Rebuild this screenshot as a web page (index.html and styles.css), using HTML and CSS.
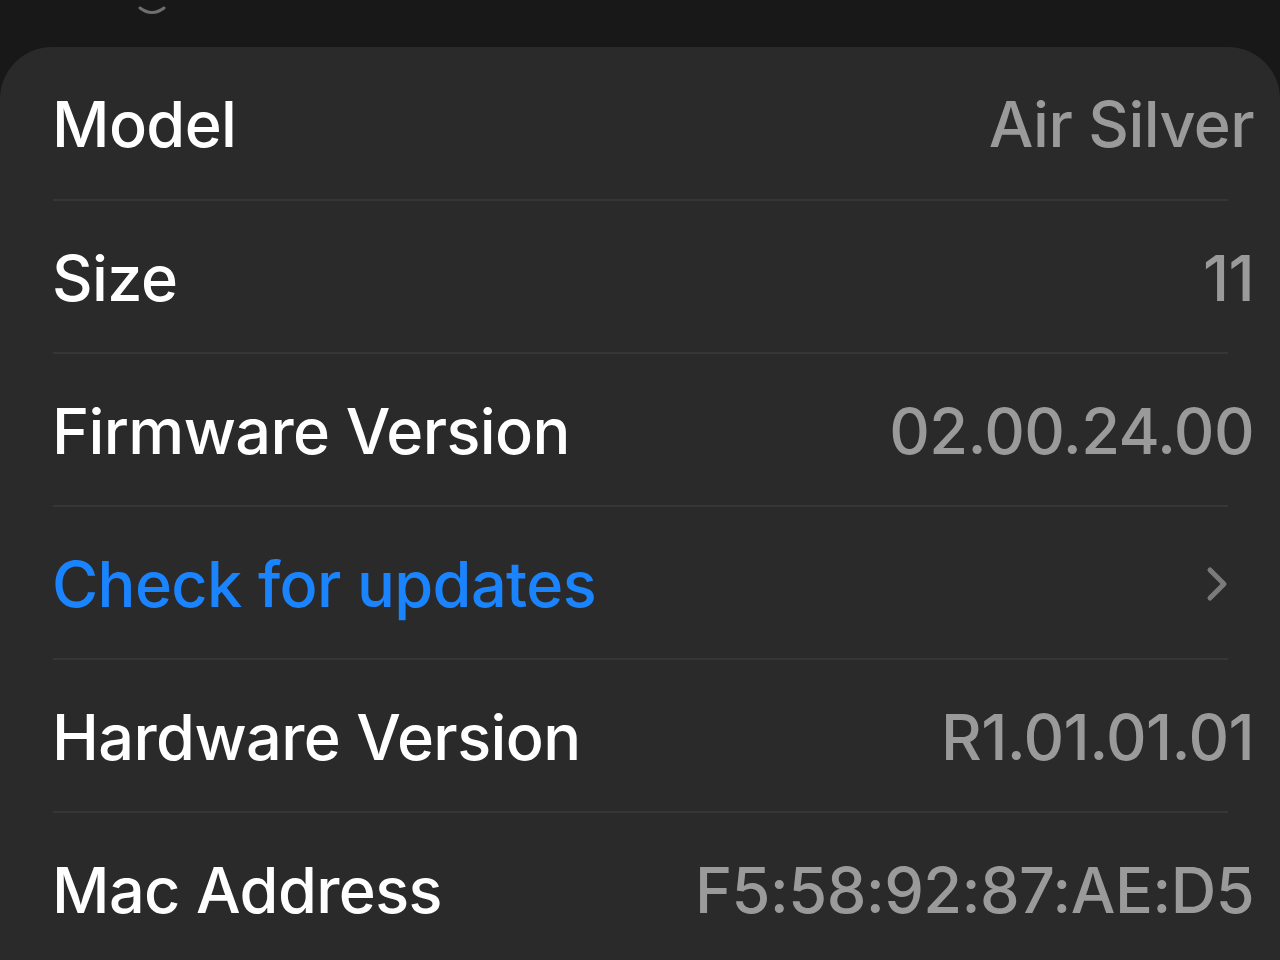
FILE: index.html
```html
<!DOCTYPE html>
<html>
<head>
<meta charset="utf-8">
<link rel="stylesheet" href="styles.css">
</head>
<body>
<div class="top">
  <svg class="grab" width="30" height="12" viewBox="0 0 30 12"><path d="M3 2 Q15 11 27 2" fill="none" stroke="#6e6e6e" stroke-width="3" stroke-linecap="round"/></svg>
</div>
<div class="card">
  <div class="row first">
    <span class="label">Model</span>
    <span class="value">Air Silver</span>
  </div>
  <div class="row">
    <span class="label">Size</span>
    <span class="value">11</span>
  </div>
  <div class="row">
    <span class="label">Firmware Version</span>
    <span class="value">02.00.24.00</span>
  </div>
  <div class="row link">
    <span class="label blue">Check for updates</span>
    <svg class="chev" width="26" height="40" viewBox="0 0 26 40"><path d="M6 6 L20 20 L6 34" fill="none" stroke="#7a7a7a" stroke-width="5" stroke-linecap="round" stroke-linejoin="round"/></svg>
  </div>
  <div class="row">
    <span class="label">Hardware Version</span>
    <span class="value">R1.01.01.01</span>
  </div>
  <div class="row">
    <span class="label">Mac Address</span>
    <span class="value">F5:58:92:87:AE:D5</span>
  </div>
</div>
</body>
</html>
```
FILE: styles.css
```css
html, body {
  margin: 0;
  padding: 0;
  background: #181818;
  width: 1280px;
  height: 960px;
  overflow: hidden;
  font-family: Inter, "Noto Sans", sans-serif;
}
.top {
  height: 47px;
  position: relative;
}
.grab {
  position: absolute;
  left: 137px;
  top: 6px;
}
.card {
  background: #2a2a2a;
  border-radius: 52px 52px 0 0;
  height: 913px;
  padding-left: 52px;
  padding-right: 26px;
}
.row {
  display: flex;
  align-items: center;
  justify-content: space-between;
  position: relative;
  box-sizing: border-box;
  height: 153px;
  padding-top: 4px;
}
.row.first {
  height: 152px;
  padding-top: 2px;
}
.row:not(.first)::before {
  content: "";
  position: absolute;
  left: 1px;
  right: 26px;
  top: 0;
  height: 2px;
  background: #363636;
}
.label {
  color: #ffffff;
  font-size: 63px;
  font-weight: 500;
  letter-spacing: -0.6px;
}
.value {
  color: #9a9a9a;
  font-size: 63px;
  font-weight: 500;
  letter-spacing: -0.6px;
}
.blue {
  color: #1a84ff;
}
.chev {
  margin-right: 24px;
}
```
